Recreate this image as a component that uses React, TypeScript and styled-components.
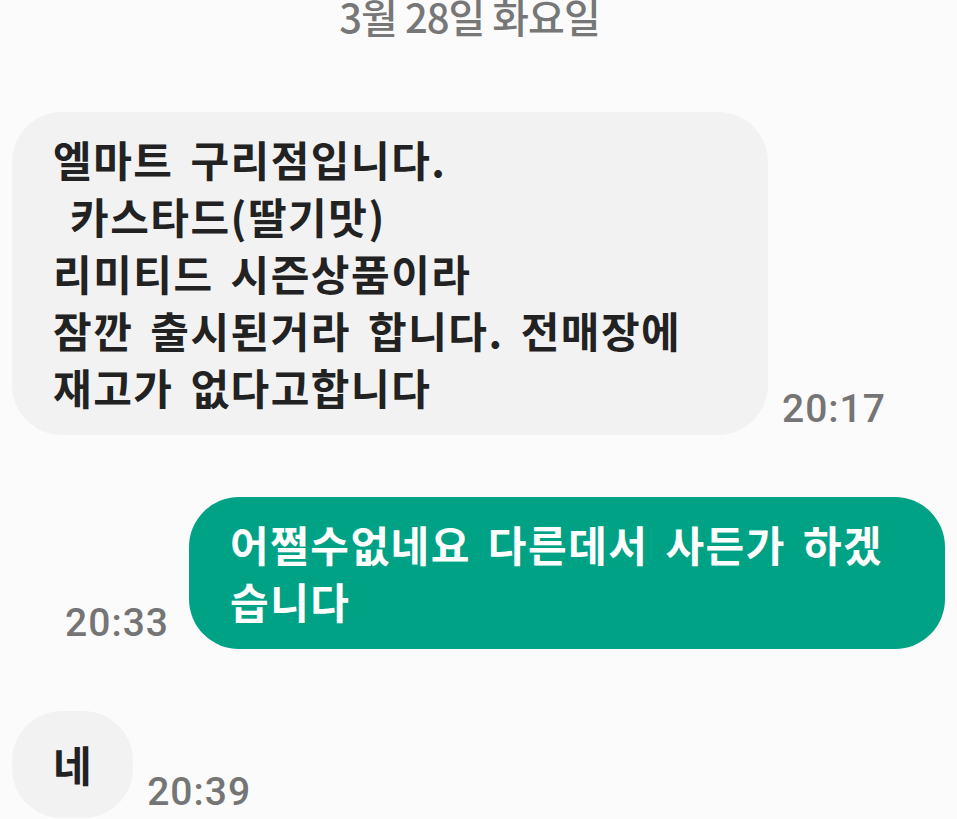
import React from "react";
import styled, { createGlobalStyle } from "styled-components";

const GlobalStyle = createGlobalStyle`
  html, body {
    margin: 0;
    padding: 0;
    background: #fbfbfb;
  }
  body {
    font-family: "Noto Sans CJK KR", "Noto Sans", sans-serif;
  }
`;

const Screen = styled.div`
  width: 957px;
  height: 819px;
  overflow: hidden;
  box-sizing: border-box;
  padding: 0 12px;
`;

const DateDivider = styled.div`
  margin-top: -4px;
  margin-bottom: 76px;
  padding-right: 18px;
  text-align: center;
  font-size: 40px;
  line-height: 40px;
  font-weight: 500;
  letter-spacing: -1px;
  color: #777;
`;

const Messages = styled.div`
  display: flex;
  flex-direction: column;
  gap: 62px;
`;

const Row = styled.div<{ $mine?: boolean }>`
  display: flex;
  align-items: flex-end;
  flex-direction: ${(p) => (p.$mine ? "row-reverse" : "row")};
  gap: ${(p) => (p.$mine ? "20px" : "14px")};
`;

const Bubble = styled.div<{ $mine?: boolean; $wide?: boolean }>`
  box-sizing: border-box;
  ${(p) => (p.$wide ? "width: 756px;" : "")}
  min-height: 107px;
  padding: 18px 40px 20px 41px;
  border-radius: 50px;
  display: flex;
  align-items: center;
  background: ${(p) => (p.$mine ? "#00a286" : "#f2f2f2")};
  color: ${(p) => (p.$mine ? "#ffffff" : "#222222")};
  font-size: 42px;
  line-height: 57px;
  font-weight: 700;
  letter-spacing: 1.5px;
  word-spacing: 6px;
  white-space: pre-wrap;
`;

const Time = styled.span`
  flex-shrink: 0;
  margin-bottom: 6px;
  font-family: Roboto, "Noto Sans", sans-serif;
  font-size: 39px;
  line-height: 1;
  font-weight: 500;
  letter-spacing: 1px;
  color: #757575;
`;

type Message = {
  text: string;
  time: string;
  mine?: boolean;
  wide?: boolean;
};

const messages: Message[] = [
  {
    text:
      "엘마트 구리점입니다.\n 카스타드(딸기맛)\n리미티드 시즌상품이라\n잠깐 출시된거라 합니다. 전매장에\n재고가 없다고합니다",
    time: "20:17",
    wide: true,
  },
  {
    text: "어쩔수없네요 다른데서 사든가 하겠\n습니다",
    time: "20:33",
    mine: true,
    wide: true,
  },
  { text: "네", time: "20:39" },
];

export default function App() {
  return (
    <>
      <GlobalStyle />
      <Screen>
        <DateDivider>3월 28일 화요일</DateDivider>
        <Messages>
          {messages.map((m) => (
            <Row key={m.time} $mine={m.mine}>
              <Bubble $mine={m.mine} $wide={m.wide}>
                {m.text}
              </Bubble>
              <Time>{m.time}</Time>
            </Row>
          ))}
        </Messages>
      </Screen>
    </>
  );
}
